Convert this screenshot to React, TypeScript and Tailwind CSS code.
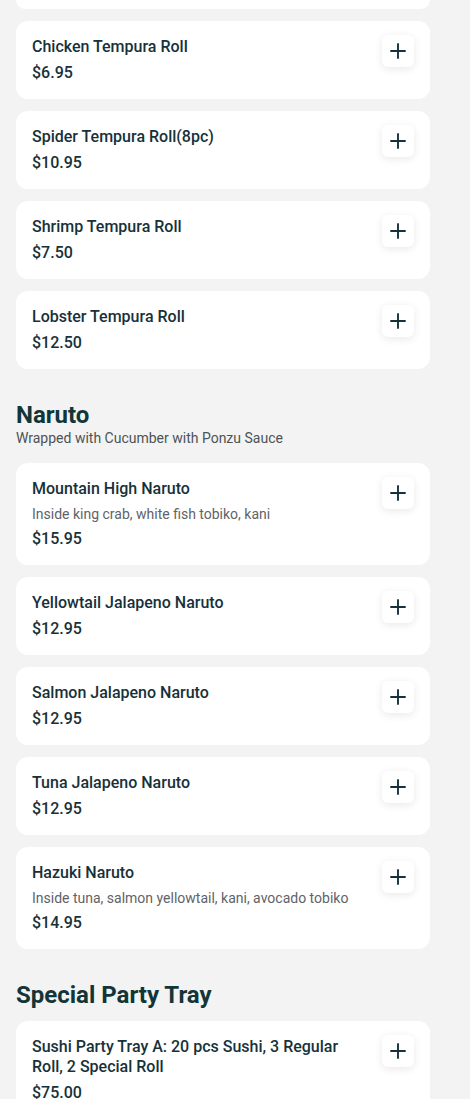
import { Plus } from "lucide-react";

type Item = { name: string; desc?: string; price: string };

const tempura: Item[] = [
    { name: "Chicken Tempura Roll", price: "$6.95" },
    { name: "Spider Tempura Roll(8pc)", price: "$10.95" },
    { name: "Shrimp Tempura Roll", price: "$7.50" },
    { name: "Lobster Tempura Roll", price: "$12.50" },
];

const naruto: Item[] = [
    { name: "Mountain High Naruto", desc: "Inside king crab, white fish tobiko, kani", price: "$15.95" },
    { name: "Yellowtail Jalapeno Naruto", price: "$12.95" },
    { name: "Salmon Jalapeno Naruto", price: "$12.95" },
    { name: "Tuna Jalapeno Naruto", price: "$12.95" },
    { name: "Hazuki Naruto", desc: "Inside tuna, salmon yellowtail, kani, avocado tobiko", price: "$14.95" },
];

const party: Item[] = [
    { name: "Sushi Party Tray A: 20 pcs Sushi, 3 Regular Roll, 2 Special Roll", price: "$75.00" },
];

function MenuCard({ item }: { item: Item }) {
    return (
        <div className="flex items-start gap-4 rounded-xl bg-white p-4">
            <div className="flex-1 flex flex-col gap-1.5">
                <div className="text-base font-medium leading-5 text-[#17313a]">{item.name}</div>
                {item.desc && <div className="text-sm leading-[18px] text-[#5f6368]">{item.desc}</div>}
                <div className="text-base font-medium leading-5 text-[#17313a]">{item.price}</div>
            </div>
            <button className="flex h-8 w-8 -mt-0.5 items-center justify-center rounded-md bg-white shadow-[0_2px_8px_rgba(0,0,0,0.09)]">
                <Plus size={24} strokeWidth={1.9} className="text-[#17313a]" />
            </button>
        </div>
    );
}

function Section({ title, subtitle, items }: { title: string; subtitle?: string; items: Item[] }) {
    return (
        <section className="mt-8">
            <div className="mb-3">
                <h2 className="text-2xl font-bold leading-7 text-[#123537]">{title}</h2>
                {subtitle && <p className="pb-1 text-sm leading-[18px] text-[#4b5358]">{subtitle}</p>}
            </div>
            <div className="flex flex-col gap-3">
                {items.map((it) => (
                    <MenuCard key={it.name} item={it} />
                ))}
            </div>
        </section>
    );
}

export default function App() {
    return (
        <main className="min-h-screen bg-[#f3f3f3] font-['Roboto',sans-serif] pb-10">
            <div className="w-[414px] ml-4">
                <div className="h-[9px] rounded-b-xl bg-white" />
                <div className="mt-3 flex flex-col gap-3">
                    {tempura.map((it) => (
                        <MenuCard key={it.name} item={it} />
                    ))}
                </div>
                <Section title="Naruto" subtitle="Wrapped with Cucumber with Ponzu Sauce" items={naruto} />
                <Section title="Special Party Tray" items={party} />
            </div>
        </main>
    );
}
